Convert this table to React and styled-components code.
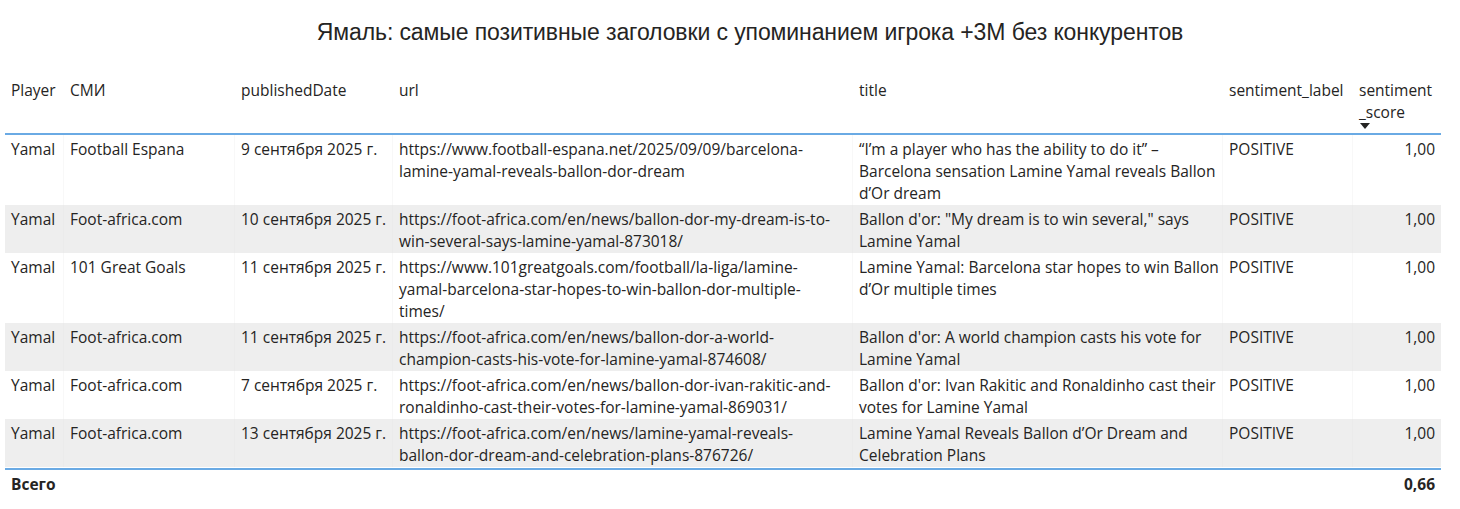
import React from "react";
import styled, { createGlobalStyle } from "styled-components";

const GlobalStyle = createGlobalStyle`
  html, body {
    margin: 0;
    padding: 0;
    background: #ffffff;
  }
  body {
    font-family: "Open Sans", "Noto Sans", sans-serif;
    color: #252423;
  }
`;

const columns = [
  { key: "player", label: "Player", width: 59 },
  { key: "media", label: "СМИ", width: 171 },
  { key: "date", label: "publishedDate", width: 158 },
  { key: "url", label: "url", width: 460 },
  { key: "title", label: "title", width: 370 },
  { key: "label", label: "sentiment_label", width: 130 },
  { key: "score", label: "sentiment\n_score", width: 88, right: true, sorted: true },
];

// line breaks kept as in the report so wrapping matches
const rows = [
  {
    player: "Yamal",
    media: "Football Espana",
    date: "9 сентября 2025 г.",
    url: "https://www.football-espana.net/2025/09/09/barcelona-\nlamine-yamal-reveals-ballon-dor-dream",
    title: "“I’m a player who has the ability to do it” –\nBarcelona sensation Lamine Yamal reveals Ballon\nd’Or dream",
    label: "POSITIVE",
    score: "1,00",
  },
  {
    player: "Yamal",
    media: "Foot-africa.com",
    date: "10 сентября 2025 г.",
    url: "https://foot-africa.com/en/news/ballon-dor-my-dream-is-to-\nwin-several-says-lamine-yamal-873018/",
    title: "Ballon d'or: \"My dream is to win several,\" says\nLamine Yamal",
    label: "POSITIVE",
    score: "1,00",
  },
  {
    player: "Yamal",
    media: "101 Great Goals",
    date: "11 сентября 2025 г.",
    url: "https://www.101greatgoals.com/football/la-liga/lamine-\nyamal-barcelona-star-hopes-to-win-ballon-dor-multiple-\ntimes/",
    title: "Lamine Yamal: Barcelona star hopes to win Ballon\nd’Or multiple times",
    label: "POSITIVE",
    score: "1,00",
  },
  {
    player: "Yamal",
    media: "Foot-africa.com",
    date: "11 сентября 2025 г.",
    url: "https://foot-africa.com/en/news/ballon-dor-a-world-\nchampion-casts-his-vote-for-lamine-yamal-874608/",
    title: "Ballon d'or: A world champion casts his vote for\nLamine Yamal",
    label: "POSITIVE",
    score: "1,00",
  },
  {
    player: "Yamal",
    media: "Foot-africa.com",
    date: "7 сентября 2025 г.",
    url: "https://foot-africa.com/en/news/ballon-dor-ivan-rakitic-and-\nronaldinho-cast-their-votes-for-lamine-yamal-869031/",
    title: "Ballon d'or: Ivan Rakitic and Ronaldinho cast their\nvotes for Lamine Yamal",
    label: "POSITIVE",
    score: "1,00",
  },
  {
    player: "Yamal",
    media: "Foot-africa.com",
    date: "13 сентября 2025 г.",
    url: "https://foot-africa.com/en/news/lamine-yamal-reveals-\nballon-dor-dream-and-celebration-plans-876726/",
    title: "Lamine Yamal Reveals Ballon d’Or Dream and\nCelebration Plans",
    label: "POSITIVE",
    score: "1,00",
  },
];

const gridCols = columns.map((c) => `${c.width}px`).join(" ");

const Page = styled.div`
  width: 1460px;
  height: 509px;
  overflow: hidden;
  display: flex;
  flex-direction: column;
`;

const Title = styled.h1`
  margin: 0;
  height: 77px;
  padding-top: 18px;
  box-sizing: border-box;
  text-align: center;
  padding-left: 40px;
  font-family: "Liberation Sans", Arial, sans-serif;
  font-weight: 400;
  font-size: 23px;
  line-height: 28px;
  color: #252423;
  letter-spacing: -0.1px;
`;

const Table = styled.div`
  margin-left: 5px;
  width: 1436px;
  display: flex;
  flex-direction: column;
`;

const Row = styled.div`
  display: grid;
  grid-template-columns: ${gridCols};
  background: ${(p) => (p.$striped ? "#eeeeee" : "#ffffff")};
`;

const HeaderRow = styled(Row)`
  border-bottom: 2px solid #6aaae4;
  height: 58px;
  box-sizing: border-box;
`;

const TotalRow = styled(Row)`
  border-top: 2px solid #6aaae4;
  margin-top: 1px;
`;

const Cell = styled.div`
  font-size: 15.5px;
  line-height: 22px;
  padding: 3px 6px 1px 6px;
  white-space: pre;
  overflow: hidden;
  text-align: ${(p) => (p.$right ? "right" : "left")};
  border-right: 1px solid ${(p) => (p.$striped ? "#ebebeb" : "#f8f8f8")};
  &:last-child {
    border-right: none;
  }
`;

const HeaderCell = styled(Cell)`
  padding-top: 2px;
  text-align: left;
  border-right: none;
`;

const TotalCell = styled(Cell)`
  font-weight: 700;
  padding-top: 3px;
  height: 30px;
  box-sizing: border-box;
  border-right: none;
`;

const SortArrow = styled.svg`
  display: block;
  margin-left: 1px;
  margin-top: 0px;
`;

export default function App() {
  return (
    <Page>
      <GlobalStyle />
      <Title>Ямаль: самые позитивные заголовки с упоминанием игрока +3M без конкурентов</Title>
      <Table>
        <HeaderRow>
          {columns.map((c) => (
            <HeaderCell key={c.key}>
              {c.label}
              {c.sorted && (
                <SortArrow width="10" height="6" viewBox="0 0 10 6">
                  <path d="M0 0 L10 0 L5 6 Z" fill="#252423" />
                </SortArrow>
              )}
            </HeaderCell>
          ))}
        </HeaderRow>
        {rows.map((r, i) => (
          <Row key={i} $striped={i % 2 === 1}>
            {columns.map((c) => (
              <Cell key={c.key} $right={c.right} $striped={i % 2 === 1}>
                {r[c.key]}
              </Cell>
            ))}
          </Row>
        ))}
        <TotalRow>
          {columns.map((c) => (
            <TotalCell key={c.key} $right={c.right}>
              {c.key === "player" ? "Всего" : c.key === "score" ? "0,66" : ""}
            </TotalCell>
          ))}
        </TotalRow>
      </Table>
    </Page>
  );
}
